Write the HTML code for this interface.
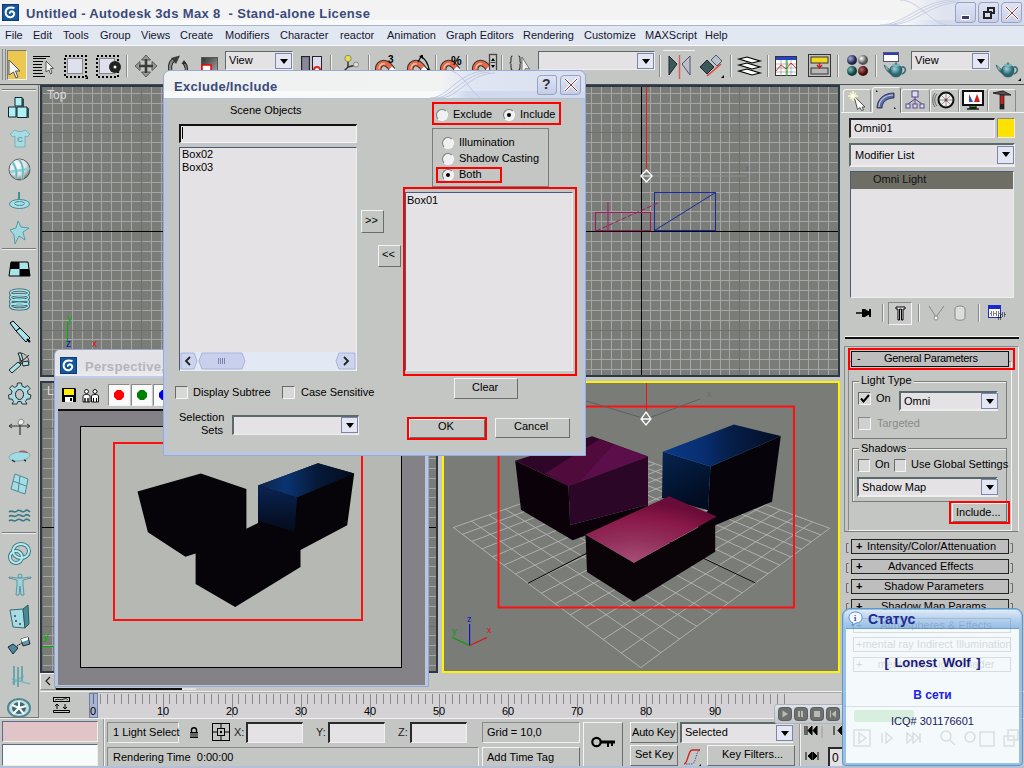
<!DOCTYPE html>
<html><head><meta charset="utf-8">
<style>
*{margin:0;padding:0;box-sizing:border-box}
html,body{width:1024px;height:768px;overflow:hidden;background:#c4c6c3;font-family:"Liberation Sans",sans-serif;font-size:11px;color:#000;position:relative}
.a{position:absolute}
svg{position:absolute;overflow:visible}
.tx{position:absolute;white-space:nowrap;line-height:1}
#title{left:0;top:0;width:1024px;height:26px;background:linear-gradient(90deg,#f2f3f2 0%,#f2f3f2 89%,#dfe4f0 92%,#d8deed 100%);border-bottom:1px solid #a9b1cb}
#title .band{left:0;top:20px;width:1024px;height:5px;background:linear-gradient(90deg,#f9fafa 0%,#f9fafa 88%,#d2daec 92%,#d2daec 100%)}
#title .t{left:26px;top:7px;font-weight:bold;font-size:13px;color:#3b4a7c;letter-spacing:.35px}
.wb{top:2px;width:21px;height:21px;border:1px solid #98a2c4;border-radius:4px 2px 4px 2px;background:linear-gradient(#dfe4f4,#c7cfe8)}
#menu{left:0;top:26px;width:1024px;height:20px;background:#e2e8f2;border-bottom:1px solid #fbfbff}
#menu span{position:absolute;top:4px;color:#161630;line-height:1}
#tb{left:0;top:46px;width:1024px;height:39px;background:#c4c6c3;border-bottom:1px solid #4a4e54}
.sep{position:absolute;width:2px;height:22px;border-left:1px solid #8a8a8a;border-right:1px solid #f0f0f0}
.dd{position:absolute;background:#e4e2e4;border:1px solid #5a6a6a;border-right-color:#eee;border-bottom-color:#eee}
.ddb{position:absolute;width:17px;height:16px;background:#e4e6f4;border:1px solid #7c86a8}
.ddb:after{content:"";position:absolute;left:4px;top:5px;border-left:4px solid transparent;border-right:4px solid transparent;border-top:5px solid #000}
#lt{left:0;top:85px;width:39px;height:633px;background:#c4c6c3;border-right:1px solid #8c8c8c}
.vp{position:absolute;background-color:#7a7c78;border:2px solid #2c3848;
 background-image:linear-gradient(90deg,#a6a4a6 1px,transparent 1px),linear-gradient(#a6a4a6 1px,transparent 1px);
 background-size:10px 10px}
#cp{left:841px;top:85px;width:183px;height:605px;background:#c4c6c3}
.btn{position:absolute;background:#c4c6c3;border:1px solid;border-color:#f4f4f4 #6c6c6c #6c6c6c #f4f4f4}
.fld{position:absolute;background:#e4e2e4;border:1px solid;border-color:#2a2a2a #f0f0f0 #f0f0f0 #2a2a2a}
</style></head><body>
<!-- TITLE -->
<div id="title" class="a"><div class="band a"></div>
<svg style="left:2px;top:4px" width="17" height="17" viewBox="0 0 17 17"><rect x="0" y="0" width="17" height="17" fill="#0a3a78"/><rect x="1" y="1" width="15" height="15" fill="#15589a"/><path d="M12.5 4.2 C9 2.5 4 3.5 3.6 8.2 C3.3 12 6.8 13.8 9.6 13 C12.5 12.2 13 9 11.2 7.8 C9.6 6.8 7.3 7.8 8 9.6" stroke="#fff" stroke-width="2" fill="none"/></svg>
<svg style="left:880px;top:0" width="80" height="25"><g fill="none" stroke="#c8d0e4" stroke-width="1"><path d="M0 25C25 25 40 0 75 0"/><path d="M5 25C30 25 45 1 79 1"/><path d="M10 25C35 25 50 3 80 2"/><path d="M20 0C40 0 50 25 70 25"/></g></svg>
<div class="t tx">Untitled - Autodesk 3ds Max 8&nbsp; - Stand-alone License</div>
<div class="wb a" style="left:955px"><div class="a" style="left:5px;top:12px;width:7px;height:3px;background:#3c3c64;border:1px solid #fff;box-sizing:content-box"></div></div>
<div class="wb a" style="left:978px"><div class="a" style="left:8px;top:4px;width:8px;height:7px;border:2px solid #222"></div><div class="a" style="left:4px;top:8px;width:9px;height:8px;border:2px solid #222;background:#d4daf0"></div></div>
<div class="wb a" style="left:1001px"><svg style="left:4px;top:4px" width="12" height="12"><path d="M0 0L12 12M12 0L0 12" stroke="#fff" stroke-width="2.6"/><path d="M0 0L12 12M12 0L0 12" stroke="#8a3c3c" stroke-width="1"/></svg></div>
</div>
<!-- MENU -->
<div id="menu" class="a">
<span style="left:5px">File</span><span style="left:33px">Edit</span><span style="left:63px">Tools</span>
<span style="left:100px">Group</span><span style="left:141px">Views</span><span style="left:180px">Create</span>
<span style="left:225px">Modifiers</span><span style="left:280px">Character</span><span style="left:340px">reactor</span>
<span style="left:387px">Animation</span><span style="left:446px">Graph Editors</span><span style="left:523px">Rendering</span>
<span style="left:584px">Customize</span><span style="left:645px">MAXScript</span><span style="left:705px">Help</span>
</div>
<!-- TOOLBAR -->
<div id="tb" class="a"></div>
<div class="a" style="left:0;top:46px;width:1024px;height:39px"><div class="a" style="left:2px;top:3px;width:4px;height:31px;border-left:1px solid #8a8a8a;border-right:1px solid #8a8a8a"></div>
<div class="a" style="left:7px;top:4px;width:20px;height:30px;background:#ecc850;border:1px solid;border-color:#7a7a7a #f4f4f4 #f4f4f4 #7a7a7a"></div>
<svg style="left:8px;top:13px" width="14" height="20" viewBox="0 0 14 20"><path d="M1 1 L12 12 L7.5 12 L10 18 L8 19 L5.5 13 L1 16 Z" fill="#f4f4f4" stroke="#555" stroke-width="1"/></svg>
<svg style="left:33px;top:9px" width="22" height="23" viewBox="0 0 22 23"><path d="M0 1.5H17M0 3.5H13M0 6.5H10M0 9.5H9M0 12.5H9M0 15.5H9M0 18.5H10M0 21.5H12" stroke="#000" stroke-width="1"/><path d="M13 6 L20.5 13.5 L17.5 13.5 L19 18 L17.5 19 L16 15 L13 17 Z" fill="#f4f4f4" stroke="#555" stroke-width="1"/></svg>
<svg style="left:64px;top:9px" width="25" height="24" viewBox="0 0 25 24"><rect x="3.5" y="3.5" width="15" height="15" fill="#dfe0ee" stroke="#888"/><path d="M1 1H22V22H1Z" fill="none" stroke="#000" stroke-width="2" stroke-dasharray="2,2"/><path d="M21 24L24 21L24 24Z" fill="#000"/></svg>
<svg style="left:96px;top:9px" width="25" height="24" viewBox="0 0 25 24"><rect x="3.5" y="3.5" width="15" height="15" fill="#dfe0ee" stroke="#888"/><path d="M1 1H22V22H1Z" fill="none" stroke="#000" stroke-width="2" stroke-dasharray="2,2"/><circle cx="19" cy="12" r="6" fill="#222"/><circle cx="19" cy="12" r="1.5" fill="#fff"/></svg>
<div class="sep" style="left:126px;top:9px"></div>
<svg style="left:134px;top:8px" width="24" height="24" viewBox="0 0 24 24"><path d="M12 1L16.5 6H7.5ZM12 23L16.5 18H7.5ZM1 12L6 7.5V16.5ZM23 12L18 7.5V16.5Z" fill="#9a9c9a" stroke="#4a4c4a" stroke-width=".9"/><path d="M12 5V19M5 12H19" stroke="#3a3c3a" stroke-width="2.6"/></svg>
<svg style="left:165px;top:8px" width="24" height="24" viewBox="0 0 24 24"><path d="M9 6 C4.5 8 4 15 6.5 20" fill="none" stroke="#2a2a2a" stroke-width="4.2"/><path d="M9 6 C4.5 8 4 15 6.5 20" fill="none" stroke="#8a8c8a" stroke-width="2.2"/><path d="M6 4 L15 1.5 L11 10 Z" fill="#3a3c3a"/><path d="M19 9 C22 12 22 17 19.5 21" fill="none" stroke="#2a2a2a" stroke-width="3.6"/><path d="M19 9 C22 12 22 17 19.5 21" fill="none" stroke="#7a7c7a" stroke-width="1.6"/><path d="M16.5 10 L19 6 L21.5 10Z" fill="#2a2a2a"/></svg>
<svg style="left:201px;top:11px" width="17" height="18" viewBox="0 0 17 18"><rect x="0" y="0" width="17" height="18" fill="#555"/><rect x="1" y="1" width="15" height="16" fill="url(#sg)"/><defs><linearGradient id="sg" x1="0" y1="0" x2="1" y2="1"><stop offset="0" stop-color="#333"/><stop offset="1" stop-color="#aaa"/></linearGradient></defs><rect x="1" y="8" width="9" height="10" fill="#fff" stroke="#e00" stroke-width="1.5"/></svg>
<div class="dd" style="left:225px;top:5px;width:68px;height:19px"><span class="tx" style="left:3px;top:3px;font-size:11px">View</span><div class="ddb" style="left:49px;top:1px"></div></div>
<svg style="left:301px;top:10px" width="22" height="20" viewBox="0 0 22 20"><rect x="0.5" y="0.5" width="8" height="19" fill="#667" stroke="#223"/><rect x="1.5" y="1.5" width="6" height="17" fill="#889"/><rect x="11.5" y="0.5" width="9" height="19" fill="#dde" stroke="#223"/><circle cx="16" cy="14" r="3" fill="#fff" stroke="#d22" stroke-width="2"/></svg>
<div class="sep" style="left:330px;top:9px"></div>
<svg style="left:339px;top:8px" width="21" height="22" viewBox="0 0 21 22"><path d="M9 5L9 13L3 19M9 13L17 11" stroke="#333" stroke-width="1.5" fill="none"/><circle cx="9" cy="4.5" r="3.2" fill="#e8e04a" stroke="#887"/><circle cx="17" cy="10.5" r="2.5" fill="#ddd" stroke="#888"/><circle cx="3" cy="19" r="2.5" fill="#ddd" stroke="#888"/></svg>
<div class="sep" style="left:368px;top:9px"></div>
<svg style="left:375px;top:8px" width="24" height="24" viewBox="0 0 24 24"><g transform="translate(0,1)"><path d="M3.5 17 C2 11 6 6.5 11 8.5 C13.5 9.5 15.5 12 17.5 15" fill="none" stroke="#333" stroke-width="6.5"/><path d="M3.5 17 C2 11 6 6.5 11 8.5 C13.5 9.5 15.5 12 17.5 15" fill="none" stroke="#e8684a" stroke-width="4.5"/><path d="M4 14 C4 10 7 8 10 9" fill="none" stroke="#f8c0a8" stroke-width="1.3"/><path d="M15.5 13 L19.5 17" stroke="#fff" stroke-width="4"/></g><text x="13" y="9" font-family="Liberation Sans" font-weight="bold" font-size="10">3</text></svg>
<svg style="left:407px;top:6px" width="26" height="26" viewBox="0 0 26 26"><g transform="translate(0,3)"><path d="M3.5 17 C2 11 6 6.5 11 8.5 C13.5 9.5 15.5 12 17.5 15" fill="none" stroke="#333" stroke-width="6.5"/><path d="M3.5 17 C2 11 6 6.5 11 8.5 C13.5 9.5 15.5 12 17.5 15" fill="none" stroke="#e8684a" stroke-width="4.5"/><path d="M4 14 C4 10 7 8 10 9" fill="none" stroke="#f8c0a8" stroke-width="1.3"/><path d="M15.5 13 L19.5 17" stroke="#fff" stroke-width="4"/></g><path d="M11 10L15 3M15 5 C19 8 21 12 22 17" fill="none" stroke="#000" stroke-width="1.2"/><path d="M12 4L16 3L16 7Z M20 16L24 18L20 20Z" fill="#000"/></svg>
<div class="sep" style="left:435px;top:9px"></div>
<svg style="left:440px;top:8px" width="26" height="24" viewBox="0 0 26 24"><g transform="translate(0,1)"><path d="M3.5 17 C2 11 6 6.5 11 8.5 C13.5 9.5 15.5 12 17.5 15" fill="none" stroke="#333" stroke-width="6.5"/><path d="M3.5 17 C2 11 6 6.5 11 8.5 C13.5 9.5 15.5 12 17.5 15" fill="none" stroke="#e8684a" stroke-width="4.5"/><path d="M4 14 C4 10 7 8 10 9" fill="none" stroke="#f8c0a8" stroke-width="1.3"/><path d="M15.5 13 L19.5 17" stroke="#fff" stroke-width="4"/></g><text x="11" y="11" font-family="Liberation Sans" font-weight="bold" font-size="12">%</text></svg>
<div class="sep" style="left:466px;top:9px"></div>
<svg style="left:472px;top:7px" width="26" height="25" viewBox="0 0 26 25"><g transform="translate(0,2)"><path d="M3.5 17 C2 11 6 6.5 11 8.5 C13.5 9.5 15.5 12 17.5 15" fill="none" stroke="#333" stroke-width="6.5"/><path d="M3.5 17 C2 11 6 6.5 11 8.5 C13.5 9.5 15.5 12 17.5 15" fill="none" stroke="#e8684a" stroke-width="4.5"/><path d="M4 14 C4 10 7 8 10 9" fill="none" stroke="#f8c0a8" stroke-width="1.3"/><path d="M15.5 13 L19.5 17" stroke="#fff" stroke-width="4"/></g><rect x="17.5" y="1.5" width="7" height="17" fill="#c8c8c8" stroke="#444" stroke-width="1.3"/><path d="M18.5 9.5H23.5" stroke="#444"/><path d="M19 8L21 5L23 8ZM19 12L21 15L23 12Z" fill="#000"/></svg>
<div class="sep" style="left:501px;top:9px"></div>
<svg style="left:508px;top:8px" width="26" height="18" viewBox="0 0 26 18"><path d="M4.5 2C3 2 3 3 3 5V7.5C3 8.5 2.5 9 1.5 9C2.5 9 3 9.5 3 10.5V13C3 15 3 16 4.5 16M10.5 2C12 2 12 3 12 5V7.5C12 8.5 12.5 9 13.5 9C12.5 9 12 9.5 12 10.5V13C12 15 12 16 10.5 16" fill="none" stroke="#333" stroke-width="1.1"/><path d="M14 3L21.5 15L17.5 14.5L16 18L14 18Z" fill="#f0f0f0" stroke="#555" stroke-width=".8"/></svg>
<div class="dd" style="left:538px;top:5px;width:117px;height:19px"><div class="ddb" style="left:98px;top:1px"></div></div>
<div class="sep" style="left:659px;top:9px"></div>
<div class="a" style="left:663px;top:4px;width:32px;height:1px;background:#f0f0f0"></div>
<svg style="left:668px;top:9px" width="24" height="24" viewBox="0 0 24 24"><path d="M1 1L9 9L1 20Z" fill="#3a5a5a" stroke="#223"/><path d="M22 1L14 9L22 20Z" fill="#b8c0cc" stroke="#556"/><path d="M11.5 0V24" stroke="#d06060" stroke-width="1.5"/></svg>
<svg style="left:699px;top:8px" width="25" height="25" viewBox="0 0 25 25"><path d="M1 13L8 6L15 13L8 20Z" fill="#3a5a5a" stroke="#223"/><path d="M12 6L17 1L23 7L18 12Z" fill="#b8c0cc" stroke="#556"/><path d="M8 22L22 10" stroke="#e04030" stroke-width="1.5"/><path d="M22 24L25 21V24Z" fill="#000"/></svg>
<div class="sep" style="left:730px;top:9px"></div>
<svg style="left:738px;top:10px" width="23" height="20" viewBox="0 0 23 20"><path d="M1 3L9 1L22 5L14 7Z M1 9L9 7L22 11L14 13Z M1 15L9 13L22 17L14 19Z" fill="#fff" stroke="#000" stroke-width="1.2"/></svg>
<div class="sep" style="left:767px;top:9px"></div>
<svg style="left:775px;top:10px" width="22" height="20" viewBox="0 0 22 20"><rect x="0.5" y="0.5" width="21" height="19" fill="#fff" stroke="#333"/><rect x="1" y="1" width="20" height="3" fill="#2244cc"/><path d="M1 8H21M1 12H21M1 16H21M6 4V20M11 4V20M16 4V20" stroke="#888" stroke-width="0.6"/><path d="M1 15L6 9L11 13L16 7L21 12" stroke="#d03030" fill="none"/><path d="M12 4V20" stroke="#2a2" stroke-width="1.2"/></svg>
<svg style="left:808px;top:8px" width="23" height="23" viewBox="0 0 23 23"><rect x="0.5" y="0.5" width="22" height="22" fill="#c0c0c0" stroke="#333"/><rect x="3" y="3" width="17" height="6" fill="#f0d820" stroke="#333"/><rect x="3" y="14" width="17" height="6" fill="#b8b8b8" stroke="#333"/><path d="M11.5 9V13M9 11L11.5 14L14 11" stroke="#c02020" fill="none" stroke-width="1.4"/></svg>
<div class="sep" style="left:837px;top:9px"></div>
<svg style="left:846px;top:8px" width="24" height="24" viewBox="0 0 24 24"><defs><radialGradient id="m1" cx=".35" cy=".35"><stop offset="0" stop-color="#aab0e0"/><stop offset="1" stop-color="#20284a"/></radialGradient><radialGradient id="m2" cx=".35" cy=".35"><stop offset="0" stop-color="#fff"/><stop offset="1" stop-color="#555"/></radialGradient><radialGradient id="m3" cx=".35" cy=".35"><stop offset="0" stop-color="#80c0c0"/><stop offset="1" stop-color="#104040"/></radialGradient><radialGradient id="m4" cx=".35" cy=".35"><stop offset="0" stop-color="#c06060"/><stop offset="1" stop-color="#401010"/></radialGradient></defs><circle cx="6" cy="6" r="5" fill="url(#m1)"/><circle cx="17" cy="6" r="5" fill="url(#m2)"/><circle cx="6" cy="17" r="5" fill="url(#m3)"/><circle cx="17" cy="17" r="5" fill="url(#m4)"/></svg>
<div class="sep" style="left:875px;top:9px"></div>
<svg style="left:883px;top:6px" width="26" height="27" viewBox="0 0 26 27"><defs><radialGradient id="tp" cx=".4" cy=".3"><stop offset="0" stop-color="#9cd4dc"/><stop offset="1" stop-color="#2a6670"/></radialGradient></defs><rect x="0.5" y="0.5" width="15" height="9" fill="#fff" stroke="#556"/><rect x="1" y="1" width="14" height="2" fill="#2a3acc"/><g transform="translate(0,4)"><path d="M7 13 C7 8 19 8 19 13 C19 19 17 21 13 21 C9 21 7 19 7 13Z" fill="url(#tp)" stroke="#2a5058" stroke-width=".6"/><path d="M8 14 C5 13 3 10 1 9 C2 12 4 16 8 18Z" fill="url(#tp)" stroke="#2a5058" stroke-width=".6"/><path d="M18.5 11 C23 10 24 16 19 18" fill="none" stroke="#3a7078" stroke-width="1.6"/><ellipse cx="13" cy="9" rx="4" ry="1.5" fill="#7ab8c0"/><circle cx="13" cy="7.5" r="1.2" fill="#4a8890"/></g></svg>
<div class="dd" style="left:911px;top:5px;width:79px;height:19px"><span class="tx" style="left:3px;top:3px;font-size:11px">View</span><div class="ddb" style="left:60px;top:1px"></div></div>
<svg style="left:995px;top:14px" width="26" height="22" viewBox="0 4 26 22"><path d="M7 13 C7 8 19 8 19 13 C19 19 17 21 13 21 C9 21 7 19 7 13Z" fill="url(#tp)" stroke="#2a5058" stroke-width=".6"/><path d="M8 14 C5 13 3 10 1 9 C2 12 4 16 8 18Z" fill="url(#tp)" stroke="#2a5058" stroke-width=".6"/><path d="M18.5 11 C23 10 24 16 19 18" fill="none" stroke="#3a7078" stroke-width="1.6"/><ellipse cx="13" cy="9" rx="4" ry="1.5" fill="#7ab8c0"/><circle cx="13" cy="7.5" r="1.2" fill="#4a8890"/><path d="M23 25L26 22V25Z" fill="#000"/></svg>
</div>
<!-- LEFT TOOLBAR -->
<div id="lt" class="a"></div>
<div class="a" style="left:0;top:85px;width:40px;height:633px"><div class="a" style="left:2px;top:4px;width:34px;height:2px;border-top:1px solid #7a7a7a;border-bottom:1px solid #eee"></div>
<svg style="left:7px;top:11px" width="24" height="23" viewBox="0 0 24 23"><g fill="#aef0f4" stroke="#123" stroke-width="1"><path d="M8 1.5H15V10H8Z"/><path d="M1.5 11H9V21H1.5Z"/><path d="M10 11H20V21.5H10Z"/></g><g fill="#2c4a4a"><path d="M15 1.5L17 3V11H15Z"/><path d="M20 11L22 12.5V22L20 21.5Z"/><path d="M9 11L10 11V21H9Z"/></g></svg>
<svg style="left:9px;top:44px" width="22" height="19" viewBox="0 0 22 19"><path d="M6 1L9 2.5H13L16 1L21 5L18 8L16 7V18H6V7L4 8L1 5Z" fill="#a8dce4" stroke="#7ab0b8"/><text x="8" y="13" font-size="8" font-weight="bold" fill="#6a9aa0" font-family="Liberation Sans">C</text></svg>
<svg style="left:8px;top:73px" width="23" height="23" viewBox="0 0 23 23"><defs><radialGradient id="bl" cx=".4" cy=".35" r=".7"><stop offset="0" stop-color="#fff"/><stop offset=".6" stop-color="#e0e0e0"/><stop offset="1" stop-color="#6a6a6a"/></radialGradient></defs><circle cx="11.5" cy="11.5" r="10.5" fill="url(#bl)" stroke="#444" stroke-width=".8"/><path d="M4 4 C8 8 9 14 8 21 M11 1.5 C15 6 16 14 14 21.5 M2 14 C8 12 15 13 21.5 10" stroke="#8ad4de" stroke-width="2.6" fill="none"/><path d="M4 4 C8 8 9 14 8 21 M11 1.5 C15 6 16 14 14 21.5" stroke="#4a8a94" stroke-width=".6" fill="none"/></svg>
<svg style="left:8px;top:106px" width="23" height="19" viewBox="0 0 23 19"><path d="M11 1V12" stroke="#4a8a94" stroke-width="2"/><ellipse cx="11.5" cy="13" rx="10" ry="4.5" fill="#a8e0e8" stroke="#4a8a94"/><ellipse cx="11.5" cy="12.5" rx="5" ry="2" fill="none" stroke="#4a8a94"/></svg>
<svg style="left:9px;top:135px" width="21" height="25" viewBox="0 0 21 25"><path d="M9 1L12 7L20 8L14 12L16 20L10 16L6 24L5 15L1 10L7 8Z" fill="#a0d8e0" stroke="#5a9aa4"/></svg>
<div class="a" style="left:2px;top:163px;width:34px;height:2px;border-top:1px solid #7a7a7a;border-bottom:1px solid #eee"></div>
<svg style="left:8px;top:176px" width="23" height="16" viewBox="0 0 23 16"><path d="M3 1H20L22 15H1Z" fill="#a8e4ec" stroke="#000"/><path d="M3 1H11.5V8H2Z M11.5 8H21L22 15H11.5Z" fill="#000"/></svg>
<svg style="left:8px;top:204px" width="23" height="21" viewBox="0 0 23 21"><g fill="none" stroke="#2a5a64" stroke-width="3"><ellipse cx="11.5" cy="4" rx="9" ry="3"/><ellipse cx="11.5" cy="8.5" rx="9" ry="3"/><ellipse cx="11.5" cy="13" rx="9" ry="3"/><ellipse cx="11.5" cy="17" rx="9" ry="3"/></g><g fill="none" stroke="#a8e4ec" stroke-width="1.4"><ellipse cx="11.5" cy="4" rx="9" ry="3"/><ellipse cx="11.5" cy="8.5" rx="9" ry="3"/><ellipse cx="11.5" cy="13" rx="9" ry="3"/><ellipse cx="11.5" cy="17" rx="9" ry="3"/></g></svg>
<svg style="left:8px;top:235px" width="23" height="23" viewBox="0 0 23 23"><path d="M2 3L5 1L12 8L8 11Z" fill="#a8e4ec" stroke="#000"/><path d="M8 11L12 8L22 18L18 22Z" fill="#a8e4ec" stroke="#000"/><path d="M19 19L22 22" stroke="#000" stroke-width="2"/></svg>
<svg style="left:8px;top:267px" width="23" height="22" viewBox="0 0 23 22"><path d="M12 11 L21 3 M12 11 L21 13 M12 11 L12 1" stroke="#222" stroke-width="1"/><path d="M12 1 C17 1 21 5 21 11" fill="none" stroke="#444"/><path d="M14 10L20 9L21 13L15 14Z" fill="#a8e4ec" stroke="#222"/><path d="M13 9L10 1L13 1L15 8Z" fill="#a8e4ec" stroke="#222"/><path d="M1 18L10 10L13 13L4 21Z" fill="#a8e4ec" stroke="#222"/></svg>
<svg style="left:8px;top:297px" width="23" height="23" viewBox="0 0 23 23"><path d="M9.5 1H13.5L14 4L17 5.5L19.5 3.5L22 6.5L19.5 9L20 12L23 13L22 17L19 17L17.5 19.5L19 22H14L13 19.5H10L9 22H4L5.5 19.5L4 17L1 17L0.5 13L3.5 12L4 9L1.5 6.5L4 3.5L6.5 5.5L9 4Z" fill="#a8dce4" stroke="#222" stroke-width=".9"/><ellipse cx="11.5" cy="12.5" rx="4" ry="5" fill="#c4c6c3" stroke="#222"/></svg>
<svg style="left:8px;top:332px" width="23" height="19" viewBox="0 0 23 19"><path d="M10 7 C10 3 13 1 15 3 C17 5 15 8 12 8Z" fill="#eee" stroke="#555" stroke-width=".7"/><path d="M1 9H22M12 8V18" stroke="#333" stroke-width="1.2"/><path d="M1 9L4 7M1 9L4 11M22 9L19 7M22 9L19 11" stroke="#333"/></svg>
<svg style="left:8px;top:364px" width="23" height="14" viewBox="0 0 23 14"><path d="M1 8C3 4 10 3 13 3C17 2 21 3 22 6C21 10 14 12 9 12C4 12 1 11 1 8Z" fill="#a0dce4" stroke="#6a9aa0" stroke-width=".7"/><path d="M11 3C14 1 18 2 20 4" fill="#7a5aa0" stroke="#c06040"/><path d="M4 11L7 13M16 11L18 12" stroke="#333" stroke-width="1.5"/></svg>
<svg style="left:9px;top:388px" width="20" height="22" viewBox="0 0 20 22"><path d="M6 1L19 6L16 21L2 16Z" fill="#a8dce4" stroke="#4a8a94"/><path d="M11 3L9 19M4 8L17 13" stroke="#4a8a94"/></svg>
<svg style="left:8px;top:424px" width="23" height="14" viewBox="0 0 23 14"><path d="M1 3C4 0 6 5 9 2C12 -1 14 5 17 2C19 0 21 2 22 3M1 7.5C4 4.5 6 9.5 9 6.5C12 3.5 14 9.5 17 6.5C19 4.5 21 6.5 22 7.5M1 12C4 9 6 14 9 11C12 8 14 14 17 11C19 9 21 11 22 12" fill="none" stroke="#3a7a84" stroke-width="1.6"/></svg>
<div class="a" style="left:2px;top:447px;width:34px;height:2px;border-top:1px solid #7a7a7a;border-bottom:1px solid #eee"></div>
<svg style="left:8px;top:457px" width="23" height="23" viewBox="0 0 23 23"><g fill="none" stroke="#3a7a84" stroke-width="4"><ellipse cx="13" cy="9" rx="8" ry="7"/><ellipse cx="8" cy="15" rx="6" ry="6"/></g><g fill="none" stroke="#b8eaf0" stroke-width="2"><ellipse cx="13" cy="9" rx="8" ry="7"/><ellipse cx="8" cy="15" rx="6" ry="6"/></g></svg>
<svg style="left:8px;top:488px" width="24" height="23" viewBox="0 0 24 23"><path d="M1 4L9 5H15L23 4L23 5L15 7V12L16 22H13L12 13L11 22H8L9 12V7L1 5Z" fill="#9ad4dc" stroke="#4a7a84" stroke-width=".7"/><circle cx="12" cy="3" r="2" fill="#9ad4dc" stroke="#4a7a84" stroke-width=".7"/></svg>
<svg style="left:9px;top:519px" width="20" height="25" viewBox="0 0 20 25"><path d="M1 6L14 5L16 24L4 23Z" fill="#a8dce4" stroke="#3a6a74"/><path d="M14 5L19 1L20 20L16 24Z" fill="#4a8a94" stroke="#2a5a64"/><circle cx="6" cy="12" r="1" fill="#345"/><circle cx="7" cy="17" r="1" fill="#345"/><circle cx="11" cy="20" r="1" fill="#345"/></svg>
<svg style="left:7px;top:551px" width="24" height="20" viewBox="0 0 24 20"><path d="M1 11L6 8L11 12L6 18Z" fill="#4a8a94" stroke="#224"/><path d="M14 3L21 1L23 8L16 10Z" fill="#5a9aa4" stroke="#224"/><path d="M14 3L21 1L21 4L15 6Z" fill="#fff"/><path d="M10 10L15 7" stroke="#000" stroke-dasharray="1.5,1"/></svg>
<svg style="left:8px;top:580px" width="23" height="24" viewBox="0 0 23 24"><path d="M6 1V20M10 2V22M4 14L22 19M4 18L16 11M14 1V16" stroke="#7ab8c0" stroke-width="1.8" fill="none"/><path d="M6 1V20M10 2V22M14 1V16" stroke="#3a7a84" stroke-width=".6" fill="none"/></svg>
<svg style="left:7px;top:613px" width="24" height="20" viewBox="0 0 24 20"><ellipse cx="12" cy="10" rx="11" ry="9" fill="#c8dce0" stroke="#4a8a94" stroke-width="2"/><ellipse cx="12" cy="10" rx="7" ry="6" fill="#3a6a74"/><path d="M12 10L12 3M12 10L19 8M12 10L17 16M12 10L6 16M12 10L5 7" stroke="#fff" stroke-width="2"/></svg>
</div>
<!-- VIEWPORTS -->
<div class="a" style="left:40px;top:85px;width:398px;height:292px;background:#7a7c78;border:2px solid #2c3848"></div>
<div class="a" style="left:442px;top:85px;width:398px;height:292px;background:#7a7c78;border:2px solid #2c3848"></div>
<div class="a" style="left:40px;top:381px;width:398px;height:292px;background:#7a7c78;border:2px solid #2c3848"></div>
<div class="a" style="left:442px;top:381px;width:398px;height:292px;border:2px solid #fff200;background:#7a7c78"></div>
<svg style="left:42px;top:87px" width="394" height="288" shape-rendering="crispEdges"><path d="M10.5 0V288M20.5 0V288M30.5 0V288M40.5 0V288M50.5 0V288M59.5 0V288M69.5 0V288M79.5 0V288M89.5 0V288M109.5 0V288M119.5 0V288M129.5 0V288M138.5 0V288M148.5 0V288M158.5 0V288M168.5 0V288M178.5 0V288M188.5 0V288M208.5 0V288M217.5 0V288M227.5 0V288M237.5 0V288M247.5 0V288M257.5 0V288M267.5 0V288M277.5 0V288M287.5 0V288M306.5 0V288M316.5 0V288M326.5 0V288M336.5 0V288M346.5 0V288M356.5 0V288M366.5 0V288M375.5 0V288M385.5 0V288M0 6.5H394M0 16.5H394M0 26.5H394M0 36.5H394M0 55.5H394M0 65.5H394M0 75.5H394M0 85.5H394M0 95.5H394M0 105.5H394M0 114.5H394M0 124.5H394M0 134.5H394M0 154.5H394M0 164.5H394M0 174.5H394M0 183.5H394M0 193.5H394M0 203.5H394M0 213.5H394M0 223.5H394M0 233.5H394M0 252.5H394M0 262.5H394M0 272.5H394M0 282.5H394" stroke="#a6a4a6"/><path d="M0.5 0V288M99.5 0V288M296.5 0V288M0 45.5H394M0 243.5H394" stroke="#6e706c"/><path d="M198.5 0V288M0 144.5H394" stroke="#000"/></svg>
<svg style="left:444px;top:87px" width="394" height="288" shape-rendering="crispEdges"><path d="M9.5 0V288M19.5 0V288M29.5 0V288M39.5 0V288M48.5 0V288M58.5 0V288M68.5 0V288M78.5 0V288M88.5 0V288M108.5 0V288M118.5 0V288M127.5 0V288M137.5 0V288M147.5 0V288M157.5 0V288M167.5 0V288M177.5 0V288M187.5 0V288M206.5 0V288M216.5 0V288M226.5 0V288M236.5 0V288M246.5 0V288M256.5 0V288M266.5 0V288M276.5 0V288M285.5 0V288M305.5 0V288M315.5 0V288M325.5 0V288M335.5 0V288M345.5 0V288M355.5 0V288M364.5 0V288M374.5 0V288M384.5 0V288M0 6.5H394M0 16.5H394M0 26.5H394M0 36.5H394M0 55.5H394M0 65.5H394M0 75.5H394M0 85.5H394M0 95.5H394M0 105.5H394M0 114.5H394M0 124.5H394M0 134.5H394M0 154.5H394M0 164.5H394M0 174.5H394M0 183.5H394M0 193.5H394M0 203.5H394M0 213.5H394M0 223.5H394M0 233.5H394M0 252.5H394M0 262.5H394M0 272.5H394M0 282.5H394" stroke="#a6a4a6"/><path d="M98.5 0V288M295.5 0V288M0 45.5H394M0 243.5H394" stroke="#6e706c"/><path d="M197.5 0V288M0 144.5H394" stroke="#000"/></svg>
<svg style="left:42px;top:383px" width="394" height="288" shape-rendering="crispEdges"><path d="M10.5 0V288M20.5 0V288M30.5 0V288M40.5 0V288M50.5 0V288M59.5 0V288M69.5 0V288M79.5 0V288M89.5 0V288M109.5 0V288M119.5 0V288M129.5 0V288M138.5 0V288M148.5 0V288M158.5 0V288M168.5 0V288M178.5 0V288M188.5 0V288M208.5 0V288M217.5 0V288M227.5 0V288M237.5 0V288M247.5 0V288M257.5 0V288M267.5 0V288M277.5 0V288M287.5 0V288M306.5 0V288M316.5 0V288M326.5 0V288M336.5 0V288M346.5 0V288M356.5 0V288M366.5 0V288M375.5 0V288M385.5 0V288M0 6.5H394M0 16.5H394M0 26.5H394M0 36.5H394M0 55.5H394M0 65.5H394M0 75.5H394M0 85.5H394M0 95.5H394M0 105.5H394M0 114.5H394M0 124.5H394M0 134.5H394M0 154.5H394M0 164.5H394M0 174.5H394M0 183.5H394M0 193.5H394M0 203.5H394M0 213.5H394M0 223.5H394M0 233.5H394M0 252.5H394M0 262.5H394M0 272.5H394M0 282.5H394" stroke="#a6a4a6"/><path d="M0.5 0V288M99.5 0V288M296.5 0V288M0 45.5H394M0 243.5H394" stroke="#6e706c"/><path d="M198.5 0V288M0 144.5H394" stroke="#000"/></svg>
<div class="tx" style="left:47px;top:89px;font-size:12px;color:#dcdcdc">Top</div>
<svg style="left:60px;top:308px" width="45" height="40"><path d="M7.5 14V38" stroke="#00b000"/><text x="7" y="14" font-size="10" fill="#00b000" font-family="Liberation Sans">y</text><text x="6" y="39" font-size="10" fill="#1010d0" font-family="Liberation Sans">z</text><text x="32" y="39" font-size="10" fill="#e01010" font-family="Liberation Sans">x</text></svg>

<div class="tx" style="left:47px;top:385px;font-size:12px;color:#dcdcdc">L</div>
<div class="a" style="left:42px;top:646px;width:20px;height:1px;background:#00b000"></div>
<div class="tx" style="left:43px;top:631px;font-size:11px;color:#00b000">y</div>

<div class="a" style="left:646px;top:87px;width:1px;height:83px;background:#e02020"></div>
<svg style="left:600px;top:160px" width="160" height="80">
<path d="M50 16H146" stroke="#909090"/><text x="145" y="11" font-size="9" fill="#6a6c6a" font-family="Liberation Sans">x</text>
<path d="M46.5 10L52 16L46.5 22L41 16Z" fill="none" stroke="#fff" stroke-width="1.4"/><path d="M41 16H52" stroke="#fff"/>
<rect x="54.5" y="32.5" width="61" height="38" fill="none" stroke="#1a2aa0"/><path d="M54.5 70.5L115.5 32.5" stroke="#1a2aa0"/>
<rect x="-4.5" y="52.5" width="55" height="18" fill="none" stroke="#a01860"/><path d="M8 42V71" stroke="#a01860"/><path d="M-4 71L60 42" stroke="#a01860" stroke-dasharray="5,2"/>
</svg>

<svg style="left:444px;top:383px" width="394" height="289">
<path d="M9.3 144.5L201.1 77.0M9.3 144.5L196.8 284.6M18.4 151.3L211.2 80.7M27.5 138.1L216.9 269.8M27.9 158.4L221.7 84.6M44.8 132.0L235.5 256.0M38.0 165.9L232.5 88.6M61.2 126.2L252.8 243.3M48.6 173.8L243.8 92.8M76.9 120.7L269.0 231.3M59.7 182.2L255.5 97.1M91.9 115.4L284.1 220.2M71.5 191.0L267.7 101.6M106.2 110.4L298.2 209.8M84.0 200.3L280.3 106.3M119.9 105.6L311.5 200.0M97.2 210.2L293.5 111.2M133.0 101.0L324.0 190.8M111.3 220.7L307.3 116.3M145.5 96.5L335.8 182.1M126.2 231.8L321.6 121.6M157.6 92.3L346.9 173.9M142.1 243.7L336.6 127.1M169.1 88.2L357.4 166.2M159.1 256.4L352.2 132.9M180.2 84.3L367.3 158.9M177.3 270.0L368.6 139.0M190.9 80.6L376.7 151.9M196.8 284.6L385.7 145.3M201.1 77.0L385.7 145.3" stroke="#b4b4b4" stroke-width="0.9" fill="none"/>
<path d="M84.0 200.3L194.0 144.0L311.5 200.0" stroke="#000" stroke-width="1" fill="none"/>
<defs>
<linearGradient id="b1t" x1="0" y1="0" x2="1" y2="0"><stop offset="0" stop-color="#2a0828"/><stop offset=".45" stop-color="#4a0c3e"/><stop offset="1" stop-color="#6a1452"/></linearGradient>
<linearGradient id="b2t" x1="0" y1="0" x2="1" y2="0"><stop offset="0" stop-color="#0a3a88"/><stop offset=".35" stop-color="#082e70"/><stop offset=".55" stop-color="#06204c"/><stop offset="1" stop-color="#040c24"/></linearGradient>
<linearGradient id="b2f" x1="0" y1="0" x2=".4" y2="1"><stop offset="0" stop-color="#062452"/><stop offset=".5" stop-color="#031838"/><stop offset="1" stop-color="#020c20"/></linearGradient>
<radialGradient id="b3t" cx=".37" cy="1" r=".9"><stop offset="0" stop-color="#a85078"/><stop offset=".4" stop-color="#92305c"/><stop offset=".75" stop-color="#8a1848"/><stop offset="1" stop-color="#6a0c38"/></radialGradient>
</defs>
<polygon points="71.2,77.7 124.5,103.1 126.2,142.0 204.0,121.7 204.0,129.0 128.7,157.3 77.0,126.8" fill="#0a0208"/>
<polygon points="124.5,103.1 204.0,73.5 204.0,121.7 126.2,142.0" fill="#2c0626"/>
<polygon points="71.2,77.7 148.2,53.2 204.0,73.5 124.5,103.1" fill="#2e0628"/>
<polygon points="100.8,90.4 155.8,56.0 169.3,61.0 135.5,99.0 124.5,103.1" fill="#500a3c"/>
<polygon points="135.5,99.0 169.3,61.0 204.0,73.5" fill="#5c0e4a"/>
<polygon points="266.5,83.6 336.8,53.1 328.0,118.7 250.0,151.0 264.0,127.3" fill="#06040a"/>
<polygon points="218.8,68.7 266.5,83.6 264.0,127.3 218.0,115.0" fill="url(#b2f)"/>
<polygon points="218.8,68.7 289.9,41.4 336.8,53.1 266.5,83.6" fill="url(#b2t)"/>
<polygon points="141.5,151.5 189.9,179.7 271.2,135.0 271.2,168.7 189.9,218.7 143.0,189.0" fill="#0a0408"/>
<polygon points="141.5,151.5 225.0,113.2 272.7,133.6 189.9,179.7" fill="url(#b3t)"/>
<rect x="54.5" y="23.5" width="295.5" height="201.0" fill="none" stroke="#ff1010" stroke-width="2"/>
<path d="M202.5 0V30.0" stroke="#e01818" stroke-width="1"/>
<path d="M202.0 36.0L139.0 17.0M202.0 36.0L256.0 16.0" stroke="#5e605e" stroke-width="1"/>
<text x="263.0" y="14.0" font-size="9" fill="#6a6c6a" font-family="Liberation Sans">x</text>
<path d="M202.0 29.0L207.0 36.0L202.0 42.0L197.0 36.0ZM197.0 36.0H207.0" fill="none" stroke="#fff" stroke-width="1.3"/>
<path d="M25.6 262.5V241.0" stroke="#1010d0" stroke-width="1.2"/>
<path d="M25.6 262.5L43.0 254.5" stroke="#e01010" stroke-width="1.2"/>
<path d="M25.6 262.5L8.5 254.5" stroke="#00a000" stroke-width="1.2"/>
<text x="23.0" y="239.0" font-size="9" fill="#1010d0" font-family="Liberation Sans">z</text>
<text x="43.0" y="250.0" font-size="9" fill="#e01010" font-family="Liberation Sans">x</text>
<text x="8.0" y="251.0" font-size="9" fill="#00a000" font-family="Liberation Sans">y</text>
</svg>
<!-- COMMAND PANEL -->
<div id="cp" class="a"></div>
<!-- tabs -->
<div class="a" style="left:841px;top:112px;width:183px;height:1px;background:#f4f4f4"></div>
<div class="a" style="left:843px;top:89px;width:28px;height:23px;background:#c4c6c3;border:1px solid;border-color:#f4f4f4 #8a8a8a transparent #f4f4f4;border-radius:3px 3px 0 0"></div>
<div class="a" style="left:872px;top:87px;width:29px;height:26px;background:#c4c6c3;border:1px solid;border-color:#f4f4f4 #6a6a6a transparent #f4f4f4;border-radius:3px 3px 0 0"></div>
<div class="a" style="left:901px;top:89px;width:29px;height:23px;background:#c4c6c3;border:1px solid;border-color:#f4f4f4 #8a8a8a transparent #f4f4f4;border-radius:3px 3px 0 0"></div>
<div class="a" style="left:930px;top:89px;width:29px;height:23px;background:#c4c6c3;border:1px solid;border-color:#f4f4f4 #8a8a8a transparent #f4f4f4;border-radius:3px 3px 0 0"></div>
<div class="a" style="left:959px;top:89px;width:29px;height:23px;background:#c4c6c3;border:1px solid;border-color:#f4f4f4 #8a8a8a transparent #f4f4f4;border-radius:3px 3px 0 0"></div>
<div class="a" style="left:988px;top:89px;width:28px;height:23px;background:#c4c6c3;border:1px solid;border-color:#f4f4f4 #8a8a8a transparent #f4f4f4;border-radius:3px 3px 0 0"></div>
<svg style="left:848px;top:90px" width="20" height="20" viewBox="0 0 20 20"><path d="M6 6 L17 17 L14 17 L15.5 20 L13.5 20.5 L12 17.5 L9.5 19.5 Z" fill="#fff" stroke="#444" stroke-width=".9"/><path d="M5 1V11M0 6H10M2 3L8 9M8 3L2 9" stroke="#fff8c0" stroke-width="1.5"/><circle cx="5" cy="6" r="2" fill="#fff"/></svg>
<svg style="left:876px;top:91px" width="20" height="18" viewBox="0 0 20 18"><path d="M1 17 C1 8 8 2 18 2 L18 7 C11 7 6 11 6 17Z" fill="#5a6aaa" stroke="#223" stroke-width=".8"/><path d="M3 16 C3 9 9 4 17 4" stroke="#c8d0f0" stroke-width="1.2" fill="none"/><path d="M0 0H1V1ZM18 17H19V18" stroke="#000"/></svg>
<svg style="left:905px;top:90px" width="20" height="20" viewBox="0 0 20 20"><rect x="7" y="1" width="6" height="6" fill="#dde" stroke="#5a4a8a"/><rect x="1" y="14" width="4" height="4" fill="#dde" stroke="#5a4a8a"/><rect x="8" y="14" width="4" height="4" fill="#dde" stroke="#5a4a8a"/><rect x="15" y="14" width="4" height="4" fill="#dde" stroke="#5a4a8a"/><path d="M10 7V14M10 9L3 14M10 9L17 14" stroke="#5a4a8a"/></svg>
<svg style="left:933px;top:91px" width="22" height="18" viewBox="0 0 22 18"><circle cx="13" cy="9" r="7.5" fill="#eee" stroke="#111" stroke-width="2"/><circle cx="13" cy="9" r="1.5" fill="#d02020"/><path d="M13 2V16M6 9H20M8 4L18 14M18 4L8 14" stroke="#555" stroke-width=".6"/><path d="M4 3C1 6 1 12 4 15M2 2C-1 6 -1 12 2 16" stroke="#666" fill="none"/></svg>
<svg style="left:962px;top:90px" width="22" height="20" viewBox="0 0 22 20"><rect x="1" y="1" width="20" height="14" fill="#fff" stroke="#111" stroke-width="2"/><path d="M7 4V12H11Z" fill="#3a4ac0"/><path d="M12 12L15 4L18 12Z" fill="#d02020"/><path d="M8 17H14V19H8Z M5 19H17" stroke="#222" stroke-width="1.5"/><rect x="9" y="16" width="4" height="1" fill="#2a2"/></svg>
<svg style="left:991px;top:90px" width="22" height="20" viewBox="0 0 22 20"><path d="M2 3L12 1L20 5L12 5Z" fill="#555" stroke="#222"/><rect x="9" y="5" width="4" height="14" fill="#c02020" stroke="#222" stroke-width=".7"/><rect x="9" y="14" width="4" height="5" fill="#222"/></svg>
<!-- name field -->
<div class="fld" style="left:849px;top:118px;width:146px;height:20px;border-width:2px 1px 1px 2px"><span class="tx" style="left:3px;top:3px;font-size:11px">Omni01</span></div>
<div class="a" style="left:997px;top:118px;width:18px;height:20px;background:#ffe200;border:1px solid;border-color:#8a8a8a #f0f0f0 #f0f0f0 #8a8a8a"></div>
<div class="dd" style="left:849px;top:143px;width:166px;height:24px;border-width:2px"><span class="tx" style="left:4px;top:5px;font-size:11px">Modifier List</span><div class="ddb" style="left:146px;top:1px;height:18px"></div></div>
<div class="a" style="left:850px;top:171px;width:164px;height:127px;background:#e4e2e4;border:1px solid;border-color:#4a5a7a #e8f0e8 #e8f0e8 #4a5a7a"></div>
<div class="a" style="left:851px;top:172px;width:162px;height:17px;background:#6e6e64"></div>
<div class="tx" style="left:873px;top:174px;font-size:11px;color:#111">Omni Light</div>
<!-- stack icons -->
<svg style="left:856px;top:306px" width="18" height="14" viewBox="0 0 18 14"><path d="M0 7H6" stroke="#000" stroke-width="1.5"/><path d="M6 3H9L12 5H15V9H12L9 11H6Z" fill="#000"/><path d="M14 3V11" stroke="#000" stroke-width="2"/></svg>
<div class="a" style="left:882px;top:304px;width:2px;height:18px;border-left:1px solid #8a8a8a;border-right:1px solid #f0f0f0"></div>
<div class="a" style="left:888px;top:302px;width:24px;height:23px;border:1px solid;border-color:#8a8a8a #f4f4f4 #f4f4f4 #8a8a8a;background:#cacaca"></div>
<svg style="left:895px;top:306px" width="11" height="15" viewBox="0 0 11 15"><path d="M1 1H10V3H8V14H6.5V3H4.5V14H3V3H1Z" fill="#fff" stroke="#000" stroke-width="1"/></svg>
<div class="a" style="left:918px;top:304px;width:2px;height:18px;border-left:1px solid #8a8a8a;border-right:1px solid #f0f0f0"></div>
<svg style="left:928px;top:305px" width="17" height="17" viewBox="0 0 17 17"><path d="M1 1L8 12L16 1M8 12V14" stroke="#888" fill="none"/><circle cx="8" cy="13" r="2" fill="#fff" stroke="#888"/></svg>
<svg style="left:953px;top:305px" width="14" height="17" viewBox="0 0 14 17"><ellipse cx="7" cy="4" rx="5" ry="3" fill="#ddd" stroke="#888"/><path d="M2 4V13C2 16 12 16 12 13V4" fill="#ddd" stroke="#888"/></svg>
<div class="a" style="left:978px;top:304px;width:2px;height:18px;border-left:1px solid #8a8a8a;border-right:1px solid #f0f0f0"></div>
<svg style="left:988px;top:305px" width="17" height="16" viewBox="0 0 17 16"><rect x="0.5" y="0.5" width="12" height="12" fill="#fff" stroke="#1a2acc"/><rect x="1" y="1" width="12" height="3" fill="#1a2acc"/><path d="M3 7H6V10H3ZM8 7H11V10H8ZM10 11H13V14H10ZM14 8H17V11H14Z" fill="none" stroke="#000" stroke-dasharray="1,1"/></svg>
<div class="a" style="left:845px;top:337px;width:174px;height:2px;background:#111;border-top:1px solid #111"></div>
<div class="a" style="left:845px;top:336px;width:174px;height:1px;background:#f4f4f4"></div>
<!-- general parameters rollout -->
<div class="a" style="left:844px;top:346px;width:175px;height:186px;border:1px solid;border-color:#8a8a8a #f4f4f4 #7a7a7a #8a8a8a"></div>
<div class="a" style="left:848px;top:361px;width:164px;height:170px;border:1px solid;border-color:#8a8a8a #f4f4f4 #f4f4f4 #8a8a8a"></div>
<div class="a" style="left:851px;top:351px;width:158px;height:16px;background:#bebebe;border:1px solid #111"></div>
<div class="tx" style="left:857px;top:353px;font-size:11px">-</div>
<div class="tx" style="left:884px;top:353px;font-size:11px;letter-spacing:-.3px">General Parameters</div>
<div class="a" style="left:848px;top:348px;width:167px;height:22px;border:2px solid #ff0000"></div>
<div class="a" style="left:852px;top:381px;width:155px;height:58px;border:1px solid #7a7c7a;box-shadow:inset 1px 1px 0 #eef0ee"></div>
<div class="tx" style="left:859px;top:375px;font-size:11px;background:#c4c6c3;padding:0 2px">Light Type</div>
<div class="a" style="left:858px;top:392px;width:13px;height:13px;background:#d8d8d8;border:1px solid;border-color:#6a6a6a #f4f4f4 #f4f4f4 #6a6a6a"></div>
<svg style="left:860px;top:394px" width="10" height="10" viewBox="0 0 10 10"><path d="M1 4.5L3.5 7.5L9 1" stroke="#000" stroke-width="2" fill="none"/></svg>
<div class="tx" style="left:876px;top:393px;font-size:11px">On</div>
<div class="dd" style="left:899px;top:391px;width:99px;height:20px;border-width:2px"><span class="tx" style="left:3px;top:3px;font-size:11px">Omni</span><div class="ddb" style="left:80px;top:0px;height:16px"></div></div>
<div class="a" style="left:858px;top:417px;width:13px;height:13px;background:#d0d0d0;border:1px solid;border-color:#8a8a8a #f4f4f4 #f4f4f4 #8a8a8a"></div>
<div class="tx" style="left:877px;top:418px;font-size:11px;color:#8a8a8a">Targeted</div>
<div class="a" style="left:852px;top:448px;width:155px;height:54px;border:1px solid #7a7c7a;box-shadow:inset 1px 1px 0 #eef0ee"></div>
<div class="tx" style="left:859px;top:443px;font-size:11px;background:#c4c6c3;padding:0 2px">Shadows</div>
<div class="a" style="left:858px;top:459px;width:12px;height:13px;background:#d8d8d8;border:1px solid;border-color:#6a6a6a #f4f4f4 #f4f4f4 #6a6a6a"></div>
<div class="tx" style="left:875px;top:459px;font-size:11px">On</div>
<div class="a" style="left:894px;top:459px;width:12px;height:13px;background:#d8d8d8;border:1px solid;border-color:#6a6a6a #f4f4f4 #f4f4f4 #6a6a6a"></div>
<div class="tx" style="left:911px;top:459px;font-size:11px">Use Global Settings</div>
<div class="dd" style="left:857px;top:477px;width:141px;height:20px;border-width:2px"><span class="tx" style="left:3px;top:3px;font-size:11px">Shadow Map</span><div class="ddb" style="left:122px;top:0px;height:16px"></div></div>
<div class="btn" style="left:952px;top:503px;width:55px;height:19px"><span class="tx" style="left:3px;top:3px;font-size:11px">Include...</span></div>
<div class="a" style="left:949px;top:501px;width:61px;height:23px;border:2px solid #ff0000"></div>
<!-- rollups -->
<svg style="left:845px;top:539px" width="170" height="15"><path d="M3.5 4.5H1.5V13.5H3.5M165.5 4.5H167.5V13.5H165.5" stroke="#6a6a6a" fill="none"/></svg>
<svg style="left:845px;top:559px" width="170" height="15"><path d="M3.5 4.5H1.5V13.5H3.5M165.5 4.5H167.5V13.5H165.5" stroke="#6a6a6a" fill="none"/></svg>
<svg style="left:845px;top:579px" width="170" height="15"><path d="M3.5 4.5H1.5V13.5H3.5M165.5 4.5H167.5V13.5H165.5" stroke="#6a6a6a" fill="none"/></svg>
<svg style="left:845px;top:599px" width="170" height="15"><path d="M3.5 4.5H1.5V13.5H3.5M165.5 4.5H167.5V13.5H165.5" stroke="#6a6a6a" fill="none"/></svg>

<div class="btn" style="left:851px;top:539px;width:158px;height:15px;background:#bebebe;border:1px solid #222"><span class="tx" style="left:4px;top:1px;font-size:11px;font-weight:bold">+</span><span class="tx" style="left:15px;top:1px;font-size:11px">Intensity/Color/Attenuation</span></div>
<div class="btn" style="left:851px;top:559px;width:158px;height:15px;background:#bebebe;border:1px solid #222"><span class="tx" style="left:4px;top:1px;font-size:11px;font-weight:bold">+</span><span class="tx" style="left:36px;top:1px;font-size:11px">Advanced Effects</span></div>
<div class="btn" style="left:851px;top:579px;width:158px;height:15px;background:#bebebe;border:1px solid #222"><span class="tx" style="left:4px;top:1px;font-size:11px;font-weight:bold">+</span><span class="tx" style="left:32px;top:1px;font-size:11px">Shadow Parameters</span></div>
<div class="btn" style="left:851px;top:599px;width:158px;height:15px;background:#bebebe;border:1px solid #222"><span class="tx" style="left:4px;top:1px;font-size:11px;font-weight:bold">+</span><span class="tx" style="left:29px;top:1px;font-size:11px">Shadow Map Params</span></div>

<div class="a" style="left:40px;top:673px;width:801px;height:18px;background:#c4c6c3"></div>
<div class="a" style="left:40px;top:673px;width:16px;height:17px;background:#c4c6c3;border:1px solid;border-color:#f4f4f4 #8a8a8a #8a8a8a #f4f4f4"></div>
<svg style="left:44px;top:676px" width="8" height="10"><path d="M6 1L2 5L6 9" stroke="#222" stroke-width="1.2" fill="none"/></svg>
<div class="a" style="left:56px;top:688px;width:126px;height:2px;background:#111"></div>
<div class="a" style="left:182px;top:688px;width:14px;height:2px;background:#e0e0e0"></div>
<div class="a" style="left:40px;top:691px;width:984px;height:1px;background:#f0f0f0"></div>
<div class="a" style="left:40px;top:692px;width:50px;height:26px;background:#c4c6c3"></div>
<div class="a" style="left:0;top:85px;width:39px;height:633px;border-right:1px solid #7a7a7a;border-bottom:1px solid #7a7a7a"></div>
<svg style="left:53px;top:697px" width="17" height="16" viewBox="0 0 17 16"><rect x=".5" y=".5" width="16" height="4" fill="none" stroke="#000"/><path d="M2 3C5 1 8 4 11 2C13 1 14 2 15 3" stroke="#000" fill="none" stroke-width=".8"/><path d="M.5 13.5H16.5V15.5H.5Z" fill="none" stroke="#000"/><path d="M4 12V7M2 9L4 7L6 9M12 7V12M10 10L12 12L14 10" stroke="#000" fill="none"/></svg>
<div class="a" style="left:90px;top:692px;width:751px;height:26px;background:#d4d2d4;border-top:1px solid #a8a8a8"></div>
<svg style="left:90px;top:694px" width="751" height="24"><path d="M10.5 0V10M17.5 0V10M24.5 0V10M31.5 0V10M38.5 0V10M45.5 0V10M52.5 0V10M59.5 0V10M66.5 0V10M73.5 0V23M79.5 0V10M86.5 0V10M93.5 0V10M100.5 0V10M107.5 0V10M114.5 0V10M121.5 0V10M128.5 0V10M135.5 0V10M142.5 0V23M148.5 0V10M155.5 0V10M162.5 0V10M169.5 0V10M176.5 0V10M183.5 0V10M190.5 0V10M197.5 0V10M204.5 0V10M211.5 0V23M217.5 0V10M224.5 0V10M231.5 0V10M238.5 0V10M245.5 0V10M252.5 0V10M259.5 0V10M266.5 0V10M273.5 0V10M280.5 0V23M286.5 0V10M293.5 0V10M300.5 0V10M307.5 0V10M314.5 0V10M321.5 0V10M328.5 0V10M335.5 0V10M342.5 0V10M349.5 0V23M355.5 0V10M362.5 0V10M369.5 0V10M376.5 0V10M383.5 0V10M390.5 0V10M397.5 0V10M404.5 0V10M411.5 0V10M418.5 0V23M424.5 0V10M431.5 0V10M438.5 0V10M445.5 0V10M452.5 0V10M459.5 0V10M466.5 0V10M473.5 0V10M480.5 0V10M487.5 0V23M493.5 0V10M500.5 0V10M507.5 0V10M514.5 0V10M521.5 0V10M528.5 0V10M535.5 0V10M542.5 0V10M549.5 0V10M556.5 0V23M562.5 0V10M569.5 0V10M576.5 0V10M583.5 0V10M590.5 0V10M597.5 0V10M604.5 0V10M611.5 0V10M618.5 0V10M625.5 0V23M631.5 0V10M638.5 0V10M645.5 0V10M652.5 0V10M659.5 0V10M666.5 0V10M673.5 0V10M680.5 0V10M687.5 0V10M694.5 0V23" stroke="#8a8a8a" stroke-width="1"/></svg>
<div class="a" style="left:89px;top:693px;width:9px;height:25px;background:#a8b4d0;border:1px solid #7080a8"></div><div class="a" style="left:93px;top:694px;width:1px;height:10px;background:#5a6a8a"></div>
<div class="tx" style="left:90px;top:706px;font-size:11px">0</div>
<div class="tx" style="left:157px;top:706px;font-size:11px">10</div>
<div class="tx" style="left:226px;top:706px;font-size:11px">20</div>
<div class="tx" style="left:295px;top:706px;font-size:11px">30</div>
<div class="tx" style="left:364px;top:706px;font-size:11px">40</div>
<div class="tx" style="left:433px;top:706px;font-size:11px">50</div>
<div class="tx" style="left:502px;top:706px;font-size:11px">60</div>
<div class="tx" style="left:571px;top:706px;font-size:11px">70</div>
<div class="tx" style="left:640px;top:706px;font-size:11px">80</div>
<div class="tx" style="left:709px;top:706px;font-size:11px">90</div>
<div class="a" style="left:0;top:718px;width:1024px;height:50px;background:#c4c6c3;border-top:1px solid #f0f0f0"></div>
<div class="a" style="left:2px;top:721px;width:96px;height:21px;background:#e0c4c8;border:1px solid;border-color:#5a6a88 #f0f0e0 #f0f0e0 #5a6a88"></div>
<div class="a" style="left:2px;top:744px;width:96px;height:22px;background:#f8fcfc;border:1px solid;border-color:#5a6a88 #f0f0e0 #f0f0e0 #5a6a88"></div>
<div class="a" style="left:103px;top:719px;width:2px;height:49px;border-left:1px solid #9a9a9a;border-right:1px solid #f0f0f0"></div>
<div class="a" style="left:107px;top:722px;width:72px;height:21px;border:1px solid;border-color:#8a8a8a #f0f0f0 #f0f0f0 #8a8a8a"></div>
<div class="tx" style="left:113px;top:727px;font-size:11px">1 Light Select</div>
<svg style="left:189px;top:726px" width="10" height="13" viewBox="0 0 10 13"><path d="M2.5 6V4C2.5 1 7.5 1 7.5 4V6" stroke="#000" fill="none" stroke-width="1.4"/><path d="M1 6H9V12H1Z" fill="#000"/><path d="M1 8H9M1 10H9" stroke="#ccc"/></svg>
<svg style="left:212px;top:723px" width="18" height="18" viewBox="0 0 18 18"><rect x=".5" y=".5" width="17" height="17" fill="none" stroke="#000"/><path d="M9 1V17M1 9H17" stroke="#000"/><rect x="5.5" y="5.5" width="7" height="7" fill="#c4c6c3" stroke="#000"/><circle cx="9" cy="9" r="1.2" fill="#000"/></svg>
<div class="tx" style="left:234px;top:727px;font-size:11px;color:#222">X:</div>
<div class="fld" style="left:246px;top:722px;width:57px;height:21px;border-width:2px 1px 1px 2px"></div>
<div class="tx" style="left:316px;top:727px;font-size:11px;color:#222">Y:</div>
<div class="fld" style="left:328px;top:722px;width:57px;height:21px;border-width:2px 1px 1px 2px"></div>
<div class="tx" style="left:398px;top:727px;font-size:11px;color:#222">Z:</div>
<div class="fld" style="left:410px;top:722px;width:57px;height:21px;border-width:2px 1px 1px 2px"></div>
<div class="a" style="left:107px;top:747px;width:372px;height:21px;border:1px solid;border-color:#8a8a8a #f0f0f0 #f0f0f0 #8a8a8a"></div>
<div class="tx" style="left:113px;top:752px;font-size:11px">Rendering Time&nbsp; 0:00:00</div>
<div class="a" style="left:482px;top:722px;width:98px;height:21px;border:1px solid;border-color:#8a8a8a #f0f0f0 #f0f0f0 #8a8a8a"></div>
<div class="tx" style="left:487px;top:727px;font-size:11px">Grid = 10,0</div>
<div class="btn" style="left:482px;top:747px;width:98px;height:21px"></div>
<div class="tx" style="left:487px;top:752px;font-size:11px">Add Time Tag</div>
<div class="btn" style="left:583px;top:722px;width:40px;height:45px"></div>
<svg style="left:591px;top:736px" width="25" height="13" viewBox="0 0 25 13"><circle cx="5.5" cy="6" r="4.2" fill="none" stroke="#000" stroke-width="2.2"/><path d="M9.5 4.5H24V7.5H9.5ZM16 7H18V11H16ZM20 7H22V10H20Z" fill="#000"/></svg>
<div class="btn" style="left:630px;top:722px;width:48px;height:21px"></div>
<div class="tx" style="left:632px;top:727px;font-size:11px;letter-spacing:-.2px">Auto Key</div>
<div class="btn" style="left:630px;top:745px;width:48px;height:21px"></div>
<div class="tx" style="left:635px;top:749px;font-size:11px">Set Key</div>
<div class="dd" style="left:680px;top:722px;width:113px;height:21px;border-width:2px 1px 1px 2px"><span class="tx" style="left:3px;top:3px;font-size:11px">Selected</span><div class="ddb" style="left:94px;top:1px"></div></div>
<svg style="left:683px;top:747px" width="18" height="20" viewBox="0 0 18 20"><path d="M1 17C5 17 5 3 9 3H17" stroke="#d02020" fill="none" stroke-width="1.3"/><path d="M3 17H9C13 17 13 3 17 3" stroke="#2040c0" fill="none" stroke-width=".8" stroke-dasharray="1.5,1"/><path d="M15 20L18 17V20Z" fill="#000"/></svg>
<div class="btn" style="left:707px;top:745px;width:88px;height:21px"></div>
<div class="tx" style="left:722px;top:749px;font-size:11px">Key Filters...</div>
<div class="a" style="left:799px;top:719px;width:2px;height:49px;border-left:1px solid #9a9a9a;border-right:1px solid #f0f0f0"></div>
<svg style="left:804px;top:726px" width="40" height="40"><path d="M1 0V9M3 0V9M4 4.5L8 0V9ZM9 4.5L13 0V9Z" stroke="#000" stroke-width="1" fill="#000"/><path d="M18 0V12" stroke="#9a9a9a"/><path d="M34 4.5L38 0V9ZM30 0V9" stroke="#000" fill="#000"/><path d="M2 26V34M4 30L8 26V34ZM13 30L9 26V34ZM14 26V34" stroke="#000" fill="#000"/></svg>
<div class="fld" style="left:828px;top:747px;width:14px;height:21px;border-width:2px 0 1px 2px"><span class="tx" style="left:2px;top:3px;font-size:12px">0</span></div>
<div class="a" style="left:0;top:766px;width:1024px;height:2px;background:#b4c0d8"></div>
<div class="a" style="left:54px;top:349px;width:375px;height:338px;background:#b8c6e2;border-radius:6px 6px 0 0;border:1px solid #98a8cc"></div>
<div class="a" style="left:55px;top:350px;width:373px;height:28px;border-radius:5px 5px 0 0;background:linear-gradient(#e4e4e8,#e2e2e6 60%,#ececf0);border-bottom:2px solid #c0cce4"></div>
<svg style="left:60px;top:357px" width="17" height="17" viewBox="0 0 17 17"><rect x="0" y="0" width="17" height="17" fill="#0a3a78"/><rect x="1" y="1" width="15" height="15" fill="#15589a"/><path d="M12.5 4.2 C9 2.5 4 3.5 3.6 8.2 C3.3 12 6.8 13.8 9.6 13 C12.5 12.2 13 9 11.2 7.8 C9.6 6.8 7.3 7.8 8 9.6" stroke="#fff" stroke-width="2" fill="none"/></svg>
<div class="tx" style="left:85px;top:360px;font-weight:bold;font-size:13px;color:#b4b4bc;letter-spacing:.3px">Perspective, frame 0 (1:1)</div>
<div class="a" style="left:58px;top:378px;width:367px;height:32px;background:#c4c6c3"></div>
<svg style="left:62px;top:388px" width="14" height="14" viewBox="0 0 14 14"><path d="M0 0H13L14 1V14H0Z" fill="#000"/><rect x="2" y="1" width="10" height="6" fill="#ffee00"/><rect x="3" y="9" width="8" height="5" fill="#fff"/><rect x="8" y="10" width="2" height="3" fill="#000"/></svg>
<svg style="left:82px;top:389px" width="18" height="14" viewBox="0 0 18 14"><g fill="#fff" stroke="#000" stroke-width=".9"><circle cx="4.5" cy="2.5" r="2"/><path d="M1 13V7C1 5 8 5 8 7V13H6V9V13H3V9V13Z"/><circle cx="13" cy="2.5" r="2"/><path d="M9.5 13V7C9.5 5 16.5 5 16.5 7V13H14.5V9V13H11.5V9V13Z"/></g></svg>
<div class="a" style="left:108px;top:384px;width:22px;height:22px;background:#fafafa;border:1px solid;border-color:#8a8a8a #f4f4f4 #f4f4f4 #8a8a8a"></div>
<svg style="left:114px;top:390px" width="10" height="10"><path d="M3 0H7L10 3V7L7 10H3L0 7V3Z" fill="#f00"/></svg>
<div class="a" style="left:131px;top:384px;width:21px;height:22px;background:#fafafa;border:1px solid;border-color:#8a8a8a #f4f4f4 #f4f4f4 #8a8a8a"></div>
<svg style="left:137px;top:390px" width="10" height="10"><path d="M3 0H7L10 3V7L7 10H3L0 7V3Z" fill="#008000"/></svg>
<div class="a" style="left:153px;top:384px;width:21px;height:22px;background:#fafafa;border:1px solid;border-color:#8a8a8a #f4f4f4 #f4f4f4 #8a8a8a"></div>
<svg style="left:159px;top:390px" width="10" height="10"><path d="M3 0H7L10 3V7L7 10H3L0 7V3Z" fill="#0000f0"/></svg>
<div class="a" style="left:58px;top:409px;width:367px;height:276px;background:#848286;border-top:2px solid #111"></div>
<div class="a" style="left:80px;top:426px;width:322px;height:242px;background:#b6b8b4;border:1px solid #000"></div>
<svg style="left:80px;top:426px" width="322" height="242">
<defs><linearGradient id="rb" x1="0" y1="0" x2="1" y2="0"><stop offset="0" stop-color="#10244a"/><stop offset=".3" stop-color="#0a3470"/><stop offset=".6" stop-color="#061a3a"/><stop offset="1" stop-color="#040c1c"/></linearGradient><linearGradient id="rf" x1="0" y1="0" x2="0" y2="1"><stop offset="0" stop-color="#0a2452"/><stop offset="1" stop-color="#040a1a"/></linearGradient></defs>
<rect x="34" y="17" width="248" height="177" fill="none" stroke="#ff1010" stroke-width="2"/>
<polygon points="57.5,65.5 120.8,47.6 166.4,63 166.4,102.7 178,97 178,59.4 238,37.3 274.2,47.6 267.2,99.2 220.5,124 220.5,141 155.2,181 115.6,158 115.6,127.4 105.4,130.8 67.9,106.3" fill="#060408"/>
<polygon points="178,59.4 238,37.3 274.2,47.6 217,71.6" fill="url(#rb)"/>
<polygon points="178,59.4 217,71.6 214.6,106.3 178,94.5" fill="url(#rf)"/>
</svg>

<div class="a" style="left:163px;top:70px;width:423px;height:386px;background:#b8c6e2;border-radius:7px 7px 0 0;border:1px solid #9aaad0"></div>
<div class="a" style="left:164px;top:71px;width:421px;height:28px;border-radius:6px 6px 0 0;background:linear-gradient(90deg,#eff0f0 0%,#f1f2f2 66%,#e0e6f2 72%,#d8dfef 100%);border-bottom:1px solid #b4c0dc"></div>
<div class="a" style="left:164px;top:91px;width:421px;height:7px;background:linear-gradient(90deg,#f8f9f9 0%,#f8f9f9 65%,#d0d9ee 72%,#d0d9ee 100%)"></div>
<svg style="left:430px;top:71px" width="70" height="28"><g fill="none" stroke="#c0c8e0" stroke-width="1"><path d="M0 27C18 27 28 1 55 0"/><path d="M5 27C23 27 33 2 60 1"/><path d="M10 27C28 27 38 3 65 2"/><path d="M22 0C35 5 40 20 50 27"/></g></svg>
<div class="tx" style="left:174px;top:80px;font-weight:bold;font-size:13px;color:#3b4a7c;letter-spacing:.3px">Exclude/Include</div>
<div class="a" style="left:537px;top:75px;width:20px;height:20px;border:1px solid #98a2c4;border-radius:4px 2px 4px 2px;background:linear-gradient(#dfe4f4,#c5cde6)"></div>
<div class="tx" style="left:542px;top:77px;font-weight:bold;font-size:14px;color:#333">?</div>
<div class="a" style="left:560px;top:75px;width:21px;height:20px;border:1px solid #98a2c4;border-radius:4px 2px 4px 2px;background:linear-gradient(#dfe4f4,#c5cde6)"></div>
<svg style="left:565px;top:79px" width="12" height="12"><path d="M0 0L12 12M12 0L0 12" stroke="#fff" stroke-width="2.6"/><path d="M0 0L12 12M12 0L0 12" stroke="#8a3c3c" stroke-width="1"/></svg>
<div class="a" style="left:167px;top:99px;width:415px;height:353px;background:#c4c6c3"></div>
<div class="tx" style="left:230px;top:105px;font-size:11px">Scene Objects</div>
<div class="fld" style="left:179px;top:124px;width:178px;height:19px;border-width:2px 1px 1px 2px;border-color:#111 #f4f4f4 #f4f4f4 #111"></div>
<div class="a" style="left:182px;top:127px;width:1px;height:12px;background:#000"></div>
<div class="a" style="left:179px;top:147px;width:178px;height:224px;background:#e4e2e4;border:1px solid;border-color:#4a5a7a #e8f0f0 #e8f0f0 #4a5a7a"></div>
<div class="tx" style="left:182px;top:149px;font-size:11px">Box02</div>
<div class="tx" style="left:182px;top:162px;font-size:11px">Box03</div>
<div class="a" style="left:180px;top:352px;width:176px;height:18px;background:#e2e8f4"></div>
<svg style="left:180px;top:352px" width="176" height="18"><path d="M1 1H14L17 9L14 17H1Z" fill="#ccd4ee" stroke="#a8b4d8"/><path d="M10 5L6 9L10 13" stroke="#222" stroke-width="1.8" fill="none"/><path d="M22 1H62L65 9L62 17H22L19 9Z" fill="#c8d0ee" stroke="#a8b4d8"/><path d="M38.5 6V12M40.5 6V12M42.5 6V12M44.5 6V12" stroke="#7a84a8"/><path d="M159 1H175V17H159L156 9Z" fill="#ccd4ee" stroke="#a8b4d8"/><path d="M164 5L168 9L164 13" stroke="#222" stroke-width="1.8" fill="none"/></svg>
<div class="btn" style="left:361px;top:210px;width:23px;height:23px;background:#c4c6c3"></div>
<div class="tx" style="left:365px;top:215px;font-size:11px">&gt;&gt;</div>
<div class="btn" style="left:378px;top:245px;width:23px;height:22px;background:#c4c6c3"></div>
<div class="tx" style="left:382px;top:249px;font-size:11px">&lt;&lt;</div>
<div class="a" style="left:432px;top:102px;width:129px;height:23px;border:2px solid #ff0000"></div>
<div class="a" style="left:436px;top:109px;width:12px;height:12px;border-radius:50%;background:#f0f0f0;border:1px solid;border-color:#7a7a7a #f8f8f8 #f8f8f8 #7a7a7a"></div>
<div class="tx" style="left:453px;top:109px;font-size:11px">Exclude</div>
<div class="a" style="left:503px;top:109px;width:12px;height:12px;border-radius:50%;background:#f0f0f0;border:1px solid;border-color:#7a7a7a #f8f8f8 #f8f8f8 #7a7a7a"></div>
<div class="a" style="left:507px;top:113px;width:4px;height:4px;border-radius:50%;background:#000"></div>
<div class="tx" style="left:520px;top:109px;font-size:11px">Include</div>
<div class="a" style="left:432px;top:128px;width:117px;height:59px;border:1px solid #7a7c7a"></div>
<div class="a" style="left:442px;top:137px;width:12px;height:12px;border-radius:50%;background:#f0f0f0;border:1px solid;border-color:#7a7a7a #f8f8f8 #f8f8f8 #7a7a7a"></div>
<div class="tx" style="left:459px;top:137px;font-size:11px">Illumination</div>
<div class="a" style="left:442px;top:153px;width:12px;height:12px;border-radius:50%;background:#f0f0f0;border:1px solid;border-color:#7a7a7a #f8f8f8 #f8f8f8 #7a7a7a"></div>
<div class="tx" style="left:459px;top:153px;font-size:11px">Shadow Casting</div>
<div class="a" style="left:436px;top:167px;width:66px;height:16px;border:2px solid #ff0000"></div>
<div class="a" style="left:442px;top:169px;width:12px;height:12px;border-radius:50%;background:#f0f0f0;border:1px solid;border-color:#7a7a7a #f8f8f8 #f8f8f8 #7a7a7a"></div>
<div class="a" style="left:446px;top:173px;width:4px;height:4px;border-radius:50%;background:#000"></div>
<div class="tx" style="left:459px;top:169px;font-size:11px">Both</div>
<div class="a" style="left:403px;top:187px;width:174px;height:189px;border:2px solid #ff0000"></div>
<div class="a" style="left:405px;top:192px;width:168px;height:179px;background:#e4e2e4;border:1px solid;border-color:#4a5a7a #e8f0f0 #e8f0f0 #4a5a7a"></div>
<div class="tx" style="left:407px;top:195px;font-size:11px">Box01</div>
<div class="btn" style="left:454px;top:378px;width:64px;height:21px;background:#c4c6c3"></div>
<div class="tx" style="left:472px;top:382px;font-size:11px">Clear</div>
<div class="a" style="left:175px;top:386px;width:13px;height:13px;background:#d8d8d8;border:1px solid;border-color:#6a6a6a #f4f4f4 #f4f4f4 #6a6a6a"></div>
<div class="tx" style="left:193px;top:387px;font-size:11px">Display Subtree</div>
<div class="a" style="left:282px;top:386px;width:13px;height:13px;background:#d8d8d8;border:1px solid;border-color:#6a6a6a #f4f4f4 #f4f4f4 #6a6a6a"></div>
<div class="tx" style="left:301px;top:387px;font-size:11px">Case Sensitive</div>
<div class="tx" style="left:179px;top:412px;font-size:11px">Selection</div>
<div class="tx" style="left:201px;top:425px;font-size:11px">Sets</div>
<div class="dd" style="left:232px;top:415px;width:127px;height:20px;border-width:2px 1px 1px 2px"><div class="ddb" style="left:107px;top:0px"></div></div>
<div class="a" style="left:407px;top:417px;width:80px;height:23px;border:2px solid #ff0000"></div>
<div class="btn" style="left:409px;top:419px;width:76px;height:19px;background:#c4c6c3"></div>
<div class="tx" style="left:438px;top:421px;font-size:11px">OK</div>
<div class="btn" style="left:495px;top:418px;width:75px;height:20px;background:#c4c6c3"></div>
<div class="tx" style="left:514px;top:421px;font-size:11px">Cancel</div>

<div class="a" style="left:774px;top:704px;width:72px;height:20px;background:linear-gradient(#dfe2e6,#c4c8cc);border:1px solid #aeb4bc;border-radius:3px"></div>
<svg style="left:778px;top:707px" width="64" height="14"><g fill="#6e706e" stroke="#4a4c4a" stroke-width=".8"><rect x=".5" y=".5" width="13" height="13" rx="3"/><rect x="16.5" y=".5" width="13" height="13" rx="3"/><rect x="32.5" y=".5" width="13" height="13" rx="3"/><rect x="48.5" y=".5" width="13" height="13" rx="3"/></g><g fill="#b8bab8"><path d="M4.5 3.5L10 7L4.5 10.5Z"/><rect x="20" y="4" width="2" height="6"/><rect x="23" y="4" width="2" height="6"/><rect x="36" y="4" width="6" height="6"/><path d="M52 3.5V10.5H53V3.5ZM53.5 7L58 3.5V10.5Z"/></g></svg>
<div class="a" style="left:842px;top:608px;width:181px;height:158px;border-radius:8px 8px 4px 4px;background:rgba(150,190,232,.85);border:1px solid #5a9ac8"></div>
<div class="a" style="left:844px;top:610px;width:177px;height:18px;border-radius:6px 6px 0 0;background:linear-gradient(rgba(230,240,250,.9),rgba(190,214,240,.85) 45%,rgba(150,190,232,.8))"></div>
<div class="a" style="left:846px;top:628px;width:173px;height:135px;background:rgba(250,252,252,.94);border-top:1px solid #6aa0d0"></div>
<div class="a" style="left:846px;top:600px;width:173px;height:163px;opacity:.13">
 <div class="a" style="left:7px;top:18px;width:158px;height:15px;border:1px solid #222"></div><span class="tx" style="left:10px;top:20px;font-size:11px">+&nbsp;&nbsp;&nbsp;&nbsp;&nbsp; Atmospheres &amp; Effects</span>
 <div class="a" style="left:7px;top:37px;width:158px;height:15px;border:1px solid #222"></div><span class="tx" style="left:10px;top:39px;font-size:11px">+mental ray Indirect Illumination</span>
 <div class="a" style="left:7px;top:57px;width:158px;height:15px;border:1px solid #222"></div><span class="tx" style="left:10px;top:59px;font-size:11px">+&nbsp;&nbsp;&nbsp;&nbsp; mental ray Light Shader</span>
 <div class="a" style="left:-2px;top:106px;width:175px;height:1px;background:#444"></div>
 <div class="a" style="left:8px;top:110px;width:60px;height:12px;background:#2a2;border-radius:2px"></div>
 <svg style="left:6px;top:128px" width="170" height="40"><g fill="none" stroke="#333" stroke-width="1.5"><rect x="2" y="2" width="16" height="16"/><path d="M7 5L14 10L7 15Z"/><path d="M30 5V15M34 5V15L40 10Z"/><path d="M55 5L61 10L55 15ZM61 5L67 10L61 15ZM68 5V15"/><circle cx="94" cy="8" r="5"/><path d="M98 12L103 17"/><circle cx="118" cy="9" r="5"/><rect x="128" y="4" width="14" height="14"/><rect x="152" y="8" width="10" height="10"/><rect x="156" y="2" width="10" height="10"/></g></svg>
</div>
<svg style="left:848px;top:611px" width="15" height="15" viewBox="0 0 15 15"><path d="M7.5 1C3.5 1 1 3.2 1 6.5C1 9 2.5 11 5 11.8L4 14.5L8 12C12 11.8 14 9.5 14 6.5C14 3.2 11.5 1 7.5 1Z" fill="#f4f8ff" stroke="#5a8ad0"/><text x="6" y="10" font-size="8" font-weight="bold" fill="#2a3aa0" font-family="Liberation Serif">i</text></svg>
<div class="tx" style="left:868px;top:612px;font-weight:bold;font-size:14px;color:#1e2a94">Статус</div>
<div class="tx" style="left:846px;top:656px;width:173px;text-align:center;font-weight:bold;font-size:13px;color:#1a1a7a;word-spacing:2px">[ Lonest Wolf ]</div>
<div class="tx" style="left:846px;top:689px;width:173px;text-align:center;font-weight:bold;font-size:12px;color:#2020e8">В сети</div>
<div class="tx" style="left:846px;top:716px;width:173px;text-align:center;font-size:11px;color:#1a1a60">ICQ# 301176601</div>

</body></html>
